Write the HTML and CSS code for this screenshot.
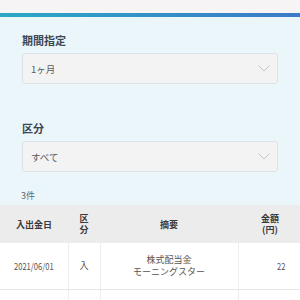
FILE: index.html
```html
<!DOCTYPE html>
<html lang="ja">
<head>
<meta charset="utf-8">
<link rel="stylesheet" href="styles.css">
</head>
<body>
<div class="topband"></div>
<div class="accent"></div>
<main class="panel">
  <div class="field">
    <div class="label">期間指定</div>
    <div class="select"><span>1ヶ月</span>
      <svg class="chev" width="12" height="7" viewBox="0 0 12 7"><polyline points="0.5,0.5 6,6 11.5,0.5" fill="none" stroke="#c4c8cc" stroke-width="1"/></svg>
    </div>
  </div>
  <div class="field second">
    <div class="label">区分</div>
    <div class="select"><span>すべて</span>
      <svg class="chev" width="12" height="7" viewBox="0 0 12 7"><polyline points="0.5,0.5 6,6 11.5,0.5" fill="none" stroke="#c4c8cc" stroke-width="1"/></svg>
    </div>
  </div>
  <div class="count">3件</div>
</main>
<table class="list">
  <colgroup><col class="c1"><col class="c2"><col class="c3"><col class="c4"></colgroup>
  <thead>
    <tr><th>入出金日</th><th>区<br>分</th><th>摘要</th><th>金額<br>(円)</th></tr>
  </thead>
  <tbody>
    <tr>
      <td class="center"><span class="num">2021/06/01</span></td>
      <td class="center">入</td>
      <td class="center">株式配当金<br>モーニングスター</td>
      <td class="right"><span class="num numr">22</span></td>
    </tr>
    <tr class="next"><td></td><td></td><td></td><td></td></tr>
  </tbody>
</table>
</body>
</html>
```
FILE: styles.css
```css
html, body {
  margin: 0;
  padding: 0;
}
body {
  width: 300px;
  height: 300px;
  overflow: hidden;
  background: #ffffff;
  font-family: "Noto Sans CJK JP", "Noto Sans", sans-serif;
}
.topband {
  height: 13px;
  background: #f6f4f4;
}
.accent {
  height: 4px;
  background: linear-gradient(to right, #2aa8c5, #3b7ac8);
}
.panel {
  background: #eaf6fa;
  padding: 15px 22px 3px 22px;
}
.field.second {
  margin-top: 36px;
}
.label {
  font-size: 11px;
  line-height: 16px;
  font-weight: 700;
  color: #3c4754;
  margin-bottom: 5px;
}
.select {
  height: 29px;
  background: #f3f3f3;
  border: 1px solid #dce3e8;
  border-radius: 3px;
  display: flex;
  align-items: center;
  justify-content: space-between;
  padding: 0 7px 0 8px;
  font-size: 9.5px;
  color: #5a5a5a;
}
.chev {
  display: block;
}
.count {
  margin-top: 17px;
  margin-left: -1px;
  font-size: 9px;
  line-height: 13px;
  color: #666;
}
.list {
  width: 300px;
  border-collapse: collapse;
  table-layout: fixed;
  font-size: 9px;
}
.c1 { width: 68px; }
.c2 { width: 32px; }
.c3 { width: 138px; }
.c4 { width: 62px; }
.list th {
  background: #ececec;
  height: 38px;
  padding: 0;
  font-weight: 700;
  color: #3a3a3a;
  line-height: 11px;
  text-align: center;
}
.list th:last-child {
  padding-left: 2px;
}
.list td {
  height: 46px;
  padding: 0;
  color: #555;
  line-height: 12px;
  border-right: 1px solid #eeeeee;
  border-bottom: 1px solid #e6e6e6;
  background: #fff;
}
.list td:last-child {
  border-right: none;
}
.center { text-align: center; }
.right { text-align: right; padding-right: 14px !important; }
.num {
  display: inline-block;
  transform: scaleX(0.8);
  font-size: 9.5px;
}
.numr {
  transform-origin: right center;
}
.next td {
  height: 20px;
}
```
